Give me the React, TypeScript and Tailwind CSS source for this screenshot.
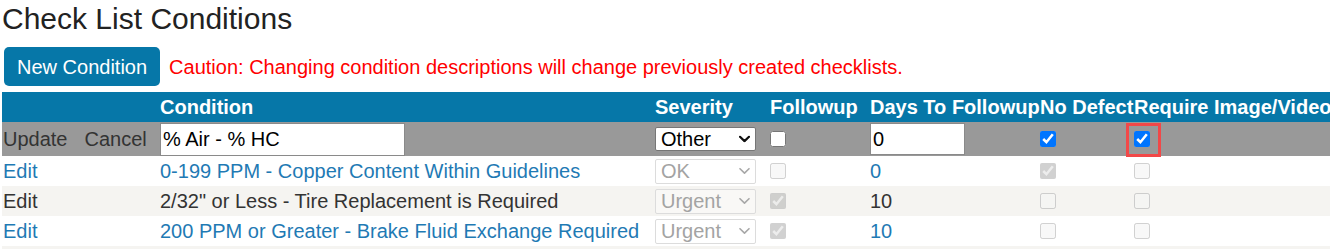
import React from 'react';

type Row = {
  condition: string;
  severity: string;
  followup: boolean;
  days: string;
  noDefect: boolean;
  requireImage: boolean;
  link: boolean;
};

const SEVERITIES = ['OK', 'Suggested', 'Urgent', 'Other'];

const rows: Row[] = [
  { condition: '0-199 PPM - Copper Content Within Guidelines', severity: 'OK', followup: false, days: '0', noDefect: true, requireImage: false, link: true },
  { condition: '2/32" or Less - Tire Replacement is Required', severity: 'Urgent', followup: true, days: '10', noDefect: false, requireImage: false, link: false },
  { condition: '200 PPM or Greater - Brake Fluid Exchange Required', severity: 'Urgent', followup: true, days: '10', noDefect: false, requireImage: false, link: true },
];

function SeveritySelect({ value, disabled }: { value: string; disabled?: boolean }) {
  return (
    <div className="relative w-[101px]">
      <select
        disabled={disabled}
        defaultValue={value}
        className={`block w-full appearance-none rounded-[2px] border pl-[5px] text-[20px] leading-[22px] ${
          disabled
            ? 'h-[25px] border-[#dcdcdc] bg-white/40 text-[#a3a3a3]'
            : 'h-[24px] border-[#767676] bg-white text-black'
        }`}
      >
        {SEVERITIES.map((s) => (
          <option key={s} value={s}>
            {s}
          </option>
        ))}
      </select>
      <svg
        className="pointer-events-none absolute right-[6px] top-1/2 -translate-y-1/2"
        width="11"
        height="7"
        viewBox="0 0 11 7"
        fill="none"
      >
        <path
          d="M1 1.2 L5.5 5.6 L10 1.2"
          stroke={disabled ? '#a8a8a8' : '#111'}
          strokeWidth={disabled ? 1.6 : 2.2}
          strokeLinecap="round"
          strokeLinejoin="round"
        />
      </svg>
    </div>
  );
}

function Check({ checked, disabled }: { checked: boolean; disabled?: boolean }) {
  return (
    <input
      type="checkbox"
      defaultChecked={checked}
      disabled={disabled}
      className="m-0 block h-4 w-4"
    />
  );
}

export default function App() {
  const cell = 'p-0 pl-[2px] text-left align-middle whitespace-nowrap';

  return (
    <div className="font-['Liberation_Sans',Arial,sans-serif] text-[20px] text-[#333]">
      <h2 className="mt-[2px] pl-[2px] text-[30px] leading-[34px] font-normal text-[#222]">
        Check List Conditions
      </h2>

      <div className="mt-[11px] flex items-center pl-[4px]">
        <button
          type="button"
          className="h-[39px] rounded-[5px] bg-[#0677a8] px-[13px] text-[20px] text-white"
        >
          New Condition
        </button>
        <span className="ml-[9px] text-[20px] text-[#ff0000]">
          Caution: Changing condition descriptions will change previously created checklists.
        </span>
      </div>

      <table className="mt-[6px] ml-[2px] w-[1328px] table-fixed border-collapse">
        <colgroup>
          <col className="w-[156px]" />
          <col className="w-[495px]" />
          <col className="w-[115px]" />
          <col className="w-[100px]" />
          <col className="w-[170px]" />
          <col className="w-[94px]" />
          <col className="w-[198px]" />
        </colgroup>
        <thead>
          <tr className="h-[30px] bg-[#0677a8] font-bold text-white">
            <th className={cell}></th>
            <th className={cell}>Condition</th>
            <th className={cell}>Severity</th>
            <th className={cell}>Followup</th>
            <th className={cell}>Days To Followup</th>
            <th className={cell}>No Defect</th>
            <th className={cell}>Require Image/Video</th>
          </tr>
        </thead>
        <tbody>
          {/* Row being edited */}
          <tr className="h-[34px] bg-[#999999]">
            <td className="p-0 pl-[1px] align-middle whitespace-nowrap text-[#333]">
              <a href="#">Update</a>
              <a href="#" className="ml-[17px]">
                Cancel
              </a>
            </td>
            <td className={cell}>
              <input
                type="text"
                defaultValue="% Air - % HC"
                className="block h-[33px] w-[245px] border border-[#8a8a8a] bg-white px-[2px] text-[20px] text-black"
              />
            </td>
            <td className={cell}>
              <SeveritySelect value="Other" />
            </td>
            <td className={cell}>
              <Check checked={false} />
            </td>
            <td className={cell}>
              <input
                type="text"
                defaultValue="0"
                className="block h-[32px] w-[95px] border border-[#8a8a8a] bg-white px-[2px] text-[20px] text-black"
              />
            </td>
            <td className={cell}>
              <Check checked={true} />
            </td>
            <td className={cell}>
              <span className="relative block w-4">
                <Check checked={true} />
                <span className="pointer-events-none absolute -left-[8px] -top-[8px] h-[34px] w-[35px] border-[3px] border-[#f24848]" />
              </span>
            </td>
          </tr>

          {rows.map((r, i) => {
            const tone = r.link ? 'text-[#1f7ab4]' : 'text-[#333]';
            return (
              <tr key={i} className={`h-[30px] ${i % 2 === 1 ? 'bg-[#f5f4f1]' : 'bg-white'}`}>
                <td className={`p-0 pl-[1px] align-middle whitespace-nowrap ${tone}`}>
                  <a href="#">Edit</a>
                </td>
                <td className={`${cell} ${tone}`}>{r.condition}</td>
                <td className={cell}>
                  <SeveritySelect value={r.severity} disabled />
                </td>
                <td className={cell}>
                  <Check checked={r.followup} disabled />
                </td>
                <td className={`${cell} ${tone}`}>{r.days}</td>
                <td className={cell}>
                  <Check checked={r.noDefect} disabled />
                </td>
                <td className={cell}>
                  <Check checked={r.requireImage} disabled />
                </td>
              </tr>
            );
          })}

          {/* next striped row, only its top edge is in view */}
          <tr className="h-[30px] bg-[#f5f4f1]">
            <td colSpan={7} className="p-0"></td>
          </tr>
        </tbody>
      </table>
    </div>
  );
}
